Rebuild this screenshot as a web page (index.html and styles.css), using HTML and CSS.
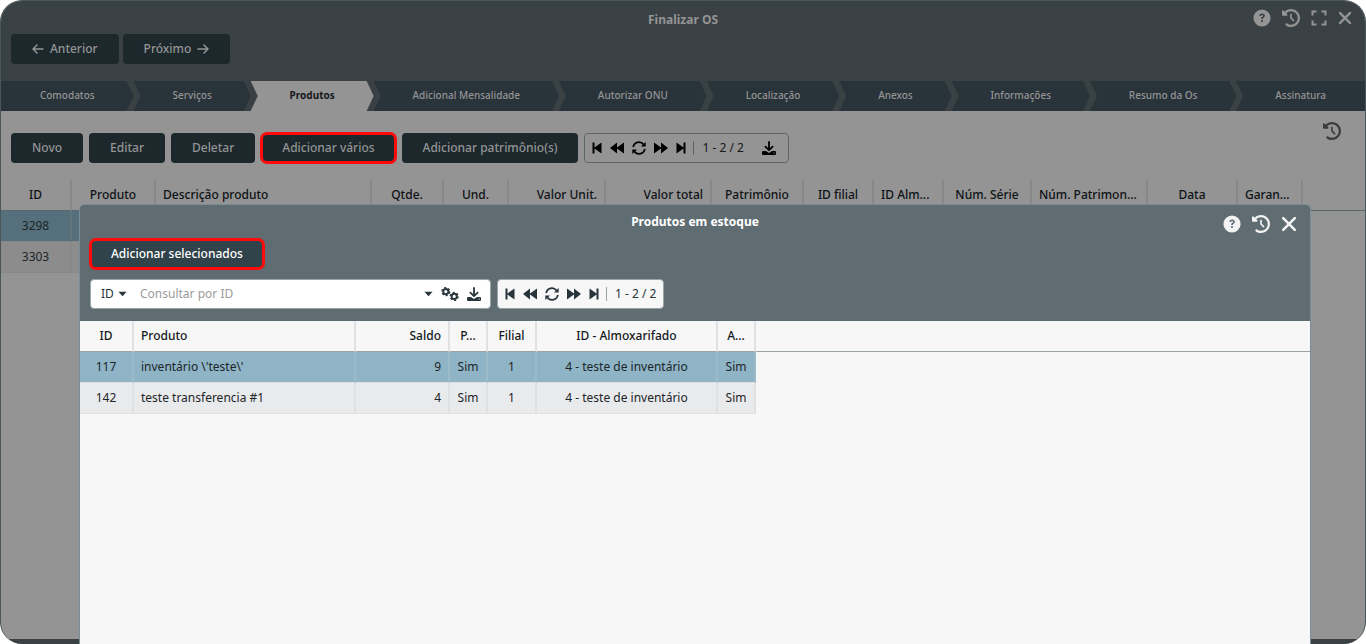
FILE: index.html
```html
<!DOCTYPE html>
<html lang="pt-BR">
<head>
<meta charset="utf-8">
<title>Finalizar OS</title>
<link rel="stylesheet" href="styles.css">
</head>
<body>
<svg class="sprite" aria-hidden="true">
  <symbol id="help" viewBox="0 0 18 18"><path fill-rule="evenodd" d="M9 0.400a8.600 8.600 0 1 0 0 17.200a8.600 8.600 0 0 0 0-17.200zM6.400 6.800C6.500 5.300 7.500 4.500 9.100 4.500c1.500 0 2.700.9 2.700 2.300c0 1.200-.8 1.700-1.400 2.100c-.5.300-.6.500-.6 1.100H8.200c0-1.300.4-1.800 1.100-2.300c.5-.3.8-.5.8-.9c0-.5-.4-.8-1-.8s-.9.300-1 1zM9 10.900a1.100 1.100 0 1 1 0 2.200a1.100 1.100 0 0 1 0-2.200z"/></symbol>
  <symbol id="history" viewBox="0 0 512 512"><path d="M75 75L41 41C25.900 25.900 0 36.600 0 57.900V168c0 13.300 10.700 24 24 24H134.100c21.400 0 32.100-25.900 17-41l-30.800-30.800C155 85.500 203 64 256 64c106 0 192 86 192 192s-86 192-192 192c-40.800 0-78.600-12.700-109.700-34.400c-14.500-10.100-34.400-6.600-44.600 7.900s-6.600 34.400 7.900 44.600C151.200 495 201.700 512 256 512c141.400 0 256-114.600 256-256S397.400 0 256 0C185.300 0 121.300 28.700 75 75zm181 53c-13.300 0-24 10.700-24 24V256c0 6.400 2.500 12.500 7 17l72 72c9.400 9.400 24.600 9.400 33.900 0s9.400-24.600 0-33.900l-65-65V152c0-13.300-10.700-24-24-24z"/></symbol>
  <symbol id="expand" viewBox="0 0 16 16"><path d="M1.500 5.500V1.500H5.500M10.500 1.500h4V5.500M14.500 10.500v4H10.500M5.500 14.500H1.500V10.500" fill="none" stroke="currentColor" stroke-width="2"/></symbol>
  <symbol id="close" viewBox="0 0 16 16"><path d="M2.200 2.200l11.600 11.600M13.800 2.200L2.200 13.800" fill="none" stroke="currentColor" stroke-width="2.600" stroke-linecap="round"/></symbol>
  <symbol id="left" viewBox="0 0 12 12"><path d="M11 6H1.200M5 2L1 6l4 4" fill="none" stroke="currentColor" stroke-width="1.500" stroke-linecap="round" stroke-linejoin="round"/></symbol>
  <symbol id="right" viewBox="0 0 12 12"><path d="M1 6h9.800M7 2l4 4-4 4" fill="none" stroke="currentColor" stroke-width="1.500" stroke-linecap="round" stroke-linejoin="round"/></symbol>
  <symbol id="first" viewBox="0 0 10 12"><path d="M.500.500h2v4.900L9.500.500v11L2.500 6.600v4.900h-2z"/></symbol>
  <symbol id="prev" viewBox="0 0 16 12"><path d="M1 6L8 .500V5.600L15 .500v11L8 6.400v5.100z"/></symbol>
  <symbol id="refresh" viewBox="0 0 14 14"><path d="M1.200 6.200A5.800 5.800 0 0 1 11.500 3.400M12.800 7.800A5.800 5.800 0 0 1 2.500 10.600" fill="none" stroke="currentColor" stroke-width="1.700"/><path d="M13.700.900v4.700H9zM.3 13.100V8.400H5z"/></symbol>
  <symbol id="next" viewBox="0 0 16 12"><path d="M15 6L8 .500V5.600L1 .500v11L8 6.400v5.100z"/></symbol>
  <symbol id="last" viewBox="0 0 10 12"><path d="M9.500.500h-2v4.900L.500.500v11L7.500 6.600v4.900h2z"/></symbol>
  <symbol id="download" viewBox="0 0 14 14"><path d="M7 1v8M3.400 5.600L7 9.100l3.600-3.500" fill="none" stroke="currentColor" stroke-width="1.800" stroke-linecap="round" stroke-linejoin="round"/><path fill-rule="evenodd" d="M1 10h2.900L7 12 10.100 10H13q1 0 1 1v2q0 1-1 1H1q-1 0-1-1v-2q0-1 1-1zM11.600 11.400v1.100h1.100v-1.100z"/></symbol>
  <symbol id="caret" viewBox="0 0 10 6"><path d="M.5.500h9L5.500 5q-.5.500-1 0z"/></symbol>
  <symbol id="gears" viewBox="0 0 18 14"><g fill="none" stroke="currentColor"><circle cx="4.800" cy="4.600" r="2.600" stroke-width="1.900"/><circle cx="4.800" cy="4.600" r="3.900" stroke-width="1.400" stroke-dasharray="2.042"/><circle cx="13.200" cy="9.400" r="2.600" stroke-width="1.900"/><circle cx="13.200" cy="9.400" r="3.900" stroke-width="1.400" stroke-dasharray="2.042"/></g></symbol>
</svg>

<main class="window">
  <header class="window-head">
    <h1 class="title">Finalizar OS</h1>
    <div class="head-icons">
      <button class="icon-btn" aria-label="Ajuda"><svg class="i18"><use href="#help"/></svg></button>
      <button class="icon-btn" aria-label="Histórico"><svg class="i18"><use href="#history"/></svg></button>
      <button class="icon-btn" aria-label="Expandir"><svg class="i16"><use href="#expand"/></svg></button>
      <button class="icon-btn" aria-label="Fechar"><svg class="i14"><use href="#close"/></svg></button>
    </div>
    <div class="wizard-nav">
      <button class="btn"><svg class="i12"><use href="#left"/></svg>Anterior</button>
      <button class="btn">Próximo<svg class="i12"><use href="#right"/></svg></button>
    </div>
  </header>
  <nav class="steps">
    <button class="step first-step">Comodatos</button>
    <button class="step">Serviços</button>
    <button class="step active">Produtos</button>
    <button class="step">Adicional Mensalidade</button>
    <button class="step">Autorizar ONU</button>
    <button class="step">Localização</button>
    <button class="step">Anexos</button>
    <button class="step">Informações</button>
    <button class="step">Resumo da Os</button>
    <button class="step last-step">Assinatura</button>
  </nav>
  <section class="content">
    <div class="toolbar">
      <button class="btn">Novo</button>
      <button class="btn">Editar</button>
      <button class="btn">Deletar</button>
      <button class="btn marked">Adicionar vários</button>
      <button class="btn">Adicionar patrimônio(s)</button>
      <div class="pager">
        <button class="icon-btn" aria-label="Primeira"><svg class="w10"><use href="#first"/></svg></button>
        <button class="icon-btn" aria-label="Anterior"><svg class="w16"><use href="#prev"/></svg></button>
        <button class="icon-btn" aria-label="Atualizar"><svg class="i14"><use href="#refresh"/></svg></button>
        <button class="icon-btn" aria-label="Próxima"><svg class="w16"><use href="#next"/></svg></button>
        <button class="icon-btn" aria-label="Última"><svg class="w10"><use href="#last"/></svg></button>
        <span class="range">1 - 2 / 2</span>
        <button class="icon-btn pager-download" aria-label="Baixar"><svg class="i14"><use href="#download"/></svg></button>
      </div>
      <button class="icon-btn page-history" aria-label="Histórico"><svg class="i18"><use href="#history"/></svg></button>
    </div>
    <table class="grid">
      <colgroup><col class="c71"><col class="c84"><col class="c216"><col class="c72"><col class="c65"><col class="c97"><col class="c106"><col class="c92"><col class="c70"><col class="c70"><col class="c88"><col class="c116"><col class="c90"><col class="c65"><col></colgroup>
      <thead><tr><th>ID</th><th>Produto</th><th class="start">Descrição produto</th><th>Qtde.</th><th>Und.</th><th class="end">Valor Unit.</th><th class="end">Valor total</th><th>Patrimônio</th><th>ID filial</th><th class="start">ID Alm...</th><th>Núm. Série</th><th class="start">Núm. Patrimon...</th><th>Data</th><th class="start">Garan...</th><th class="rest"></th></tr></thead>
      <tbody>
        <tr class="selected"><td>3298</td><td></td><td></td><td></td><td></td><td></td><td></td><td></td><td></td><td></td><td></td><td></td><td></td><td></td><td class="rest"></td></tr>
        <tr><td>3303</td><td></td><td></td><td></td><td></td><td></td><td></td><td></td><td></td><td></td><td></td><td></td><td></td><td></td><td class="rest"></td></tr>
      </tbody>
    </table>
  </section>
  <footer class="window-foot"></footer>

  <section class="modal" role="dialog" aria-label="Produtos em estoque">
    <header class="modal-head">
      <h2 class="title">Produtos em estoque</h2>
      <div class="head-icons">
        <button class="icon-btn" aria-label="Ajuda"><svg class="i18"><use href="#help"/></svg></button>
        <button class="icon-btn" aria-label="Histórico"><svg class="i18"><use href="#history"/></svg></button>
        <button class="icon-btn" aria-label="Fechar"><svg class="i16"><use href="#close"/></svg></button>
      </div>
      <div class="modal-actions"><button class="btn marked">Adicionar selecionados</button></div>
      <div class="modal-tools">
        <div class="search">
          <select class="field" aria-label="Campo de consulta"><option>ID</option></select>
          <svg class="caret"><use href="#caret"/></svg>
          <input class="query" type="text" placeholder="Consultar por ID" aria-label="Consultar por ID">
          <button class="icon-btn" aria-label="Opções"><svg class="caret"><use href="#caret"/></svg></button>
          <button class="icon-btn" aria-label="Configurar"><svg class="gears"><use href="#gears"/></svg></button>
          <button class="icon-btn" aria-label="Baixar"><svg class="i14"><use href="#download"/></svg></button>
        </div>
        <div class="pager">
          <button class="icon-btn" aria-label="Primeira"><svg class="w10"><use href="#first"/></svg></button>
          <button class="icon-btn" aria-label="Anterior"><svg class="w16"><use href="#prev"/></svg></button>
          <button class="icon-btn" aria-label="Atualizar"><svg class="i14"><use href="#refresh"/></svg></button>
          <button class="icon-btn" aria-label="Próxima"><svg class="w16"><use href="#next"/></svg></button>
          <button class="icon-btn" aria-label="Última"><svg class="w10"><use href="#last"/></svg></button>
          <span class="range">1 - 2 / 2</span>
        </div>
      </div>
    </header>
    <table class="grid">
      <colgroup><col class="c54"><col class="c222"><col class="c94"><col class="c38"><col class="c49"><col class="c181"><col class="c38"><col></colgroup>
      <thead><tr><th>ID</th><th class="start">Produto</th><th class="end">Saldo</th><th>P...</th><th>Filial</th><th>ID - Almoxarifado</th><th>A...</th><th class="rest"></th></tr></thead>
      <tbody>
        <tr class="selected"><td>117</td><td class="start">inventário \'teste\'</td><td class="end">9</td><td>Sim</td><td>1</td><td>4 - teste de inventário</td><td>Sim</td><td class="rest"></td></tr>
        <tr><td>142</td><td class="start">teste transferencia #1</td><td class="end">4</td><td>Sim</td><td>1</td><td>4 - teste de inventário</td><td>Sim</td><td class="rest"></td></tr>
      </tbody>
    </table>
  </section>
</main>
</body>
</html>
```
FILE: styles.css
```css
* { box-sizing: border-box; }
body {
  margin: 0;
  background: #fff;
  font: 12px/18px "Noto Sans", "Open Sans", sans-serif;
  color: #1c2529;
}
button, input, select { font: inherit; color: inherit; }
.sprite { display: none; }
svg { display: block; fill: currentColor; flex: none; }
.i18 { width: 18px; height: 18px; }
.i16 { width: 16px; height: 16px; }
.i14 { width: 14px; height: 14px; }
.i12 { width: 12px; height: 12px; }
.w10 { width: 10px; height: 12px; }
.w16 { width: 16px; height: 12px; }
.caret { width: 9px; height: 6px; }
.gears { width: 18px; height: 14px; }

.window {
  --btn: #1d282c;
  --btn-text: #949494;
  --line: #868889;
  --select: #55707c;
  --select-line: #61757e;
  --row: #8c8c8d;
  position: relative;
  display: flex;
  flex-direction: column;
  height: 100vh;
  overflow: hidden;
  border: 1px solid #4a5659;
  border-bottom: 0;
  border-radius: 22px;
  background: #949494;
}
.content { flex: 1; }
.window-foot { height: 5px; background: #394144; }
.window-head {
  position: relative;
  padding: 10px 10px 17px;
  background: #394144;
  color: #949494;
}
.title {
  margin: 0;
  font-size: 12px;
  line-height: 18px;
  font-weight: 700;
  text-align: center;
}
.head-icons {
  position: absolute;
  top: 8px;
  right: 13px;
  display: flex;
  align-items: center;
  gap: 11px;
}
.icon-btn {
  display: flex;
  align-items: center;
  justify-content: center;
  padding: 0;
  border: 0;
  background: none;
}
.wizard-nav { display: flex; gap: 4px; padding-top: 5px; }
.btn {
  display: flex;
  align-items: center;
  gap: 6px;
  height: 30px;
  padding: 0 21px;
  border: 0;
  border-radius: 4px;
  background: var(--btn);
  color: var(--btn-text);
  font-weight: 500;
  white-space: nowrap;
}
.marked { border-radius: 6px; outline: 3px solid #ff0a0a; outline-offset: -2px; }

.steps { display: flex; height: 30px; background: #394144; }
.step {
  flex: 1 1 auto;
  padding: 0 38px 2px;
  border: 0;
  background: #29333a;
  color: #949494;
  font-size: 10px;
  font-weight: 500;
  white-space: nowrap;
  clip-path: polygon(0 0, calc(100% - 7px) 0, 100% 50%, calc(100% - 7px) 100%, 0 100%, 7px 50%);
}
.first-step { clip-path: polygon(0 0, calc(100% - 7px) 0, 100% 50%, calc(100% - 7px) 100%, 0 100%); }
.last-step { clip-path: polygon(0 0, 100% 0, 100% 100%, 0 100%, 7px 50%); }
.active { background: #949494; color: #14191b; font-weight: 700; }

.toolbar {
  display: flex;
  align-items: center;
  gap: 6px;
  padding: 22px 24px 17px 10px;
}
.page-history { margin: -17px 0 17px auto; color: #3c3c3c; }
.pager {
  display: flex;
  align-items: center;
  gap: 7px;
  height: 30px;
  padding: 0 7px;
  border: 1px solid #5c666a;
  border-radius: 4px;
  color: #000;
}
.range {
  padding-left: 8px;
  border-left: 1px solid #5c666a;
  line-height: 14px;
  color: #14191b;
}
.pager-download { padding: 0 5px 0 11px; }

.grid { width: 100%; table-layout: fixed; border-collapse: separate; border-spacing: 0; }
.grid th, .grid td {
  height: 31px;
  padding: 0 7px 1px;
  border-right: 2px solid var(--line);
  overflow: hidden;
  text-align: center;
  white-space: nowrap;
}
.grid th { border-bottom: 1px solid #59666a; font-weight: 500; color: #0e1214; }
.grid td { border-bottom: 1px solid var(--line); background: var(--row); }
.grid .selected td { background: var(--select); border-right-color: var(--select-line); }
.grid .start { text-align: left; }
.grid .end { text-align: right; }
.grid .rest, .grid .selected .rest { border-right: 0; }
.grid td.rest, .grid .selected .rest { border-bottom: 0; background: none; }
.c38 { width: 38px; } .c49 { width: 49px; } .c54 { width: 54px; } .c65 { width: 65px; }
.c70 { width: 70px; } .c71 { width: 71px; } .c72 { width: 72px; } .c84 { width: 84px; }
.c88 { width: 88px; } .c90 { width: 90px; } .c92 { width: 92px; } .c94 { width: 94px; }
.c97 { width: 97px; } .c106 { width: 106px; } .c116 { width: 116px; } .c181 { width: 181px; }
.c216 { width: 216px; } .c222 { width: 222px; }

.modal {
  --btn: #30424a;
  --btn-text: #fff;
  --line: #dfe1e2;
  --select: #8eb4c6;
  --select-line: #9dbac8;
  --row: #e9eaec;
  position: absolute;
  inset: 203px 54px 0 78px;
  border: 1px solid #7c8e95;
  border-bottom: 0;
  border-radius: 4px 4px 0 0;
  background: #f7f7f7;
  overflow: hidden;
}
.modal-head { position: relative; padding: 8px 10px 12px; background: #5f6c72; color: #fff; }
.modal-head .head-icons { top: 10px; color: #f2f2f2; }
.modal-actions { display: flex; padding-top: 8px; }
.modal-tools { display: flex; gap: 6px; padding-top: 10px; }
.search {
  display: flex;
  align-items: center;
  width: 401px;
  height: 30px;
  padding: 0 9px 0 10px;
  gap: 8px;
  border: 1px solid #9aa5aa;
  border-radius: 4px;
  background: #fff;
  color: #28353b;
}
.field {
  width: 16px;
  margin-right: -7px;
  padding: 0;
  border: 0;
  appearance: none;
  background: none;
}
.query { flex: 1; min-width: 0; padding: 0 5px; border: 0; background: none; outline: 0; }
.query::placeholder { color: #9b9b9b; opacity: 1; }
.modal .pager { background: #f7f7f7; border-color: #9aa5aa; color: #28353b; }
.modal .range { border-color: #9aa5aa; color: #28353b; }
.modal .grid th { border-bottom-color: #9aa3a6; color: #14191b; }
```
